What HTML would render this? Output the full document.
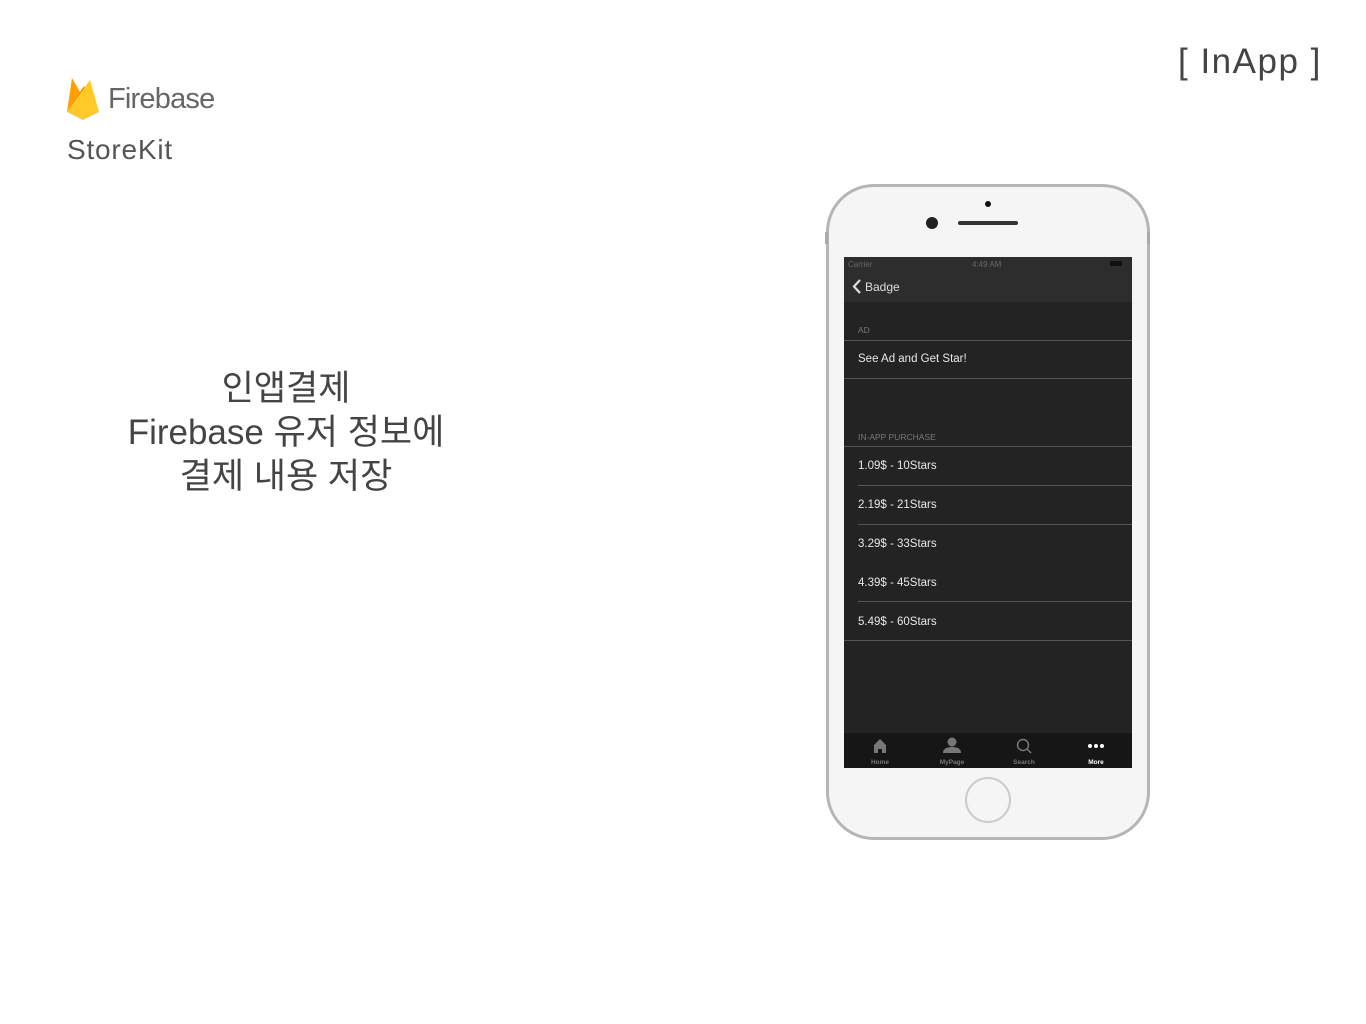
<!DOCTYPE html>
<html><head><meta charset="utf-8"><style>
body{margin:0;width:1366px;height:1024px;background:#fff;position:relative;overflow:hidden;font-family:"Liberation Sans","Noto Sans CJK KR",sans-serif;}
.a{position:absolute}
.t{position:absolute;left:858px;color:#e8e8e8;font-size:11.5px}
.ln{position:absolute;height:1px;background:#555;}
</style></head><body>
<svg class="a" style="left:66px;top:76px" width="34" height="44" viewBox="0 0 34 44">
<path d="M1 36 L6 2 L14 16 L18 10 Z" fill="#FFA000"/>
<path d="M1 36 L18 10 L22 18 Z" fill="#F57C00"/>
<path d="M1 36 L24 4 L33 36 L17 44 Z" fill="#FFCA28"/>
</svg>
<div class="a" style="left:108px;top:83px;font-size:29px;color:#666;letter-spacing:-0.8px">Firebase</div>
<div class="a" style="left:67px;top:134px;font-size:28px;color:#555;letter-spacing:0.8px">StoreKit</div>
<div class="a" style="left:1178px;top:42px;font-size:35px;color:#444;letter-spacing:1.5px">[ InApp ]</div>
<div class="a" style="left:100px;top:367px;width:372px;text-align:center;font-size:35px;line-height:44px;color:#444">인앱결제<br>Firebase 유저 정보에<br>결제 내용 저장</div>

<div class="a" style="left:826px;top:184px;width:318px;height:650px;border-radius:48px;border:3px solid #b5b5b5;background:#f4f5f4"></div>
<div class="a" style="left:825px;top:232px;width:3px;height:12px;background:#aaa"></div>
<div class="a" style="left:1147px;top:232px;width:3px;height:12px;background:#aaa"></div>
<div class="a" style="left:985px;top:201px;width:6px;height:6px;border-radius:50%;background:#111"></div>
<div class="a" style="left:958px;top:221px;width:60px;height:4px;border-radius:2px;background:#333"></div>
<div class="a" style="left:926px;top:217px;width:12px;height:12px;border-radius:50%;background:#222"></div>
<div class="a" style="left:965px;top:777px;width:42px;height:42px;border-radius:50%;border:2px solid #ccc"></div>

<div class="a" style="left:844px;top:257px;width:288px;height:511px;background:#232323"></div>
<div class="a" style="left:844px;top:257px;width:288px;height:45px;background:#2d2d2d"></div>
<div class="a" style="left:848px;top:260px;font-size:8px;color:#666">Carrier</div>
<div class="a" style="left:972px;top:260px;font-size:8px;color:#666">4:49 AM</div>
<div class="a" style="left:1110px;top:261px;width:12px;height:5px;background:#111;border-radius:1px"></div>
<svg class="a" style="left:852px;top:279px" width="10" height="15" viewBox="0 0 10 15"><path d="M8 1 L2 7.5 L8 14" fill="none" stroke="#ddd" stroke-width="2.2"/></svg>
<div class="a" style="left:865px;top:280px;font-size:12px;color:#ddd">Badge</div>
<div class="a" style="left:858px;top:325px;font-size:8.5px;color:#777">AD</div>
<div class="ln" style="left:844px;top:340px;width:288px"></div>
<div class="t" style="top:353px">See Ad and Get Star!</div>
<div class="ln" style="left:844px;top:378px;width:288px"></div>
<div class="a" style="left:858px;top:432px;font-size:8.5px;color:#777">IN-APP PURCHASE</div>
<div class="ln" style="left:844px;top:446px;width:288px"></div>
<div class="t" style="top:460px">1.09$ - 10Stars</div>
<div class="ln" style="left:858px;top:485px;width:274px"></div>
<div class="t" style="top:499px">2.19$ - 21Stars</div>
<div class="ln" style="left:858px;top:524px;width:274px"></div>
<div class="t" style="top:538px">3.29$ - 33Stars</div>
<div class="t" style="top:577px">4.39$ - 45Stars</div>
<div class="ln" style="left:858px;top:601px;width:274px"></div>
<div class="t" style="top:616px">5.49$ - 60Stars</div>
<div class="ln" style="left:844px;top:640px;width:288px"></div>

<div class="a" style="left:844px;top:733px;width:288px;height:35px;background:#161616"></div>
<svg class="a" style="left:844px;top:733px" width="288" height="35" viewBox="0 0 288 35">
<path d="M30 20 V12 L36 6 L42 12 V20 H38 V16 H34 V20 Z" fill="#777"/>
<circle cx="108" cy="9" r="4.5" fill="#777"/><path d="M99 20 Q99 14 108 14 Q117 14 117 20 Z" fill="#777"/>
<circle cx="179" cy="12" r="5.5" fill="none" stroke="#777" stroke-width="1.5"/><path d="M183 16 L187 20" stroke="#777" stroke-width="1.5"/>
<circle cx="246" cy="13" r="2" fill="#fff"/><circle cx="252" cy="13" r="2" fill="#fff"/><circle cx="258" cy="13" r="2" fill="#fff"/>
<g font-size="6.5" font-family="Liberation Sans" text-anchor="middle" font-weight="bold"><text x="36" y="31" fill="#777">Home</text><text x="108" y="31" fill="#777">MyPage</text><text x="180" y="31" fill="#777">Search</text><text x="252" y="31" fill="#fff">More</text></g>
</svg>
</body></html>
